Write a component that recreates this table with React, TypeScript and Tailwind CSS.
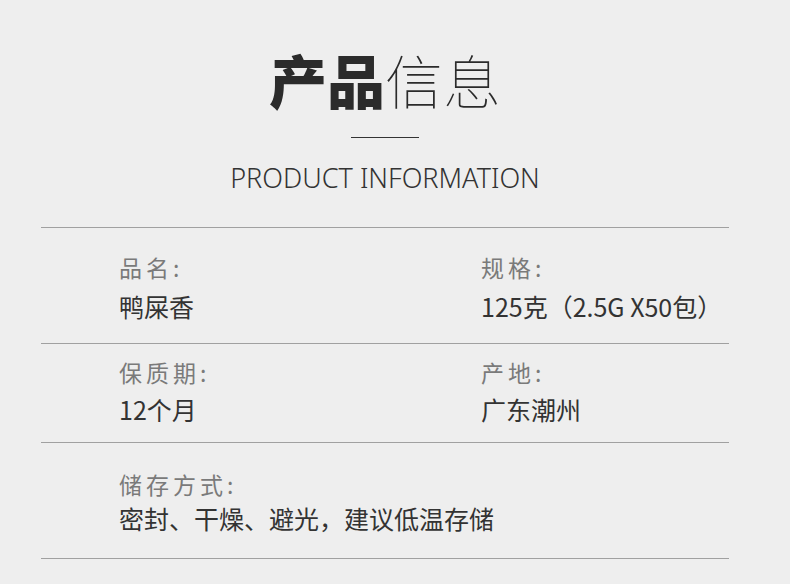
const cjk = { fontFamily: '"Noto Sans CJK SC", "Noto Sans", sans-serif' };

const rows = [
  {
    pad: "pt-[24px] pb-[22px]",
    gap: "mt-[9px]",
    fields: [
      { label: "品名:", value: "鸭屎香" },
      { label: "规格:", value: "125克（2.5G X50包）" },
    ],
  },
  {
    pad: "pt-[13px] pb-[18px]",
    gap: "mt-[7px]",
    fields: [
      { label: "保质期:", value: "12个月" },
      { label: "产地:", value: "广东潮州" },
    ],
  },
  {
    pad: "pt-[26px] pb-[25px]",
    gap: "mt-[4px]",
    fields: [{ label: "储存方式:", value: "密封、干燥、避光，建议低温存储" }],
  },
];

function Field({ label, value, gap }: { label: string; value: string; gap: string }) {
  return (
    <div className="whitespace-nowrap">
      <div className="text-[23px] leading-[30px] tracking-[4px] text-[#7a7a7a]">{label}</div>
      <div className={`${gap} text-[25px] leading-[30px] text-[#333]`}>{value}</div>
    </div>
  );
}

export default function App() {
  return (
    <div className="w-[790px] h-[584px] bg-[#eeeeee] overflow-hidden" style={cjk}>
      <div className="ml-[41px] w-[688px]">
        {/* title */}
        <div className="pt-[44px] flex justify-center text-[58px] leading-[70px] text-[#2b2b2b]">
          <span className="font-black">产品</span>
          <span className="font-thin">信息</span>
        </div>
        <div className="mx-auto mt-[23px] w-[68px] h-px bg-[#333]" />
        <div
          className="mt-[25px] text-center text-[27px] leading-[30px] text-[#333] font-light"
          style={{ fontFamily: '"Noto Sans", sans-serif' }}
        >
          PRODUCT INFORMATION
        </div>

        {/* spec table */}
        <div className="mt-[34px] border-t border-[#a0a0a0]">
          {rows.map((row, i) => (
            <div key={i} className={`border-b border-[#a0a0a0] pl-[78px] ${row.pad} grid grid-cols-[362px_1fr]`}>
              {row.fields.map((f) => (
                <Field key={f.label} label={f.label} value={f.value} gap={row.gap} />
              ))}
            </div>
          ))}
        </div>
      </div>
    </div>
  );
}
